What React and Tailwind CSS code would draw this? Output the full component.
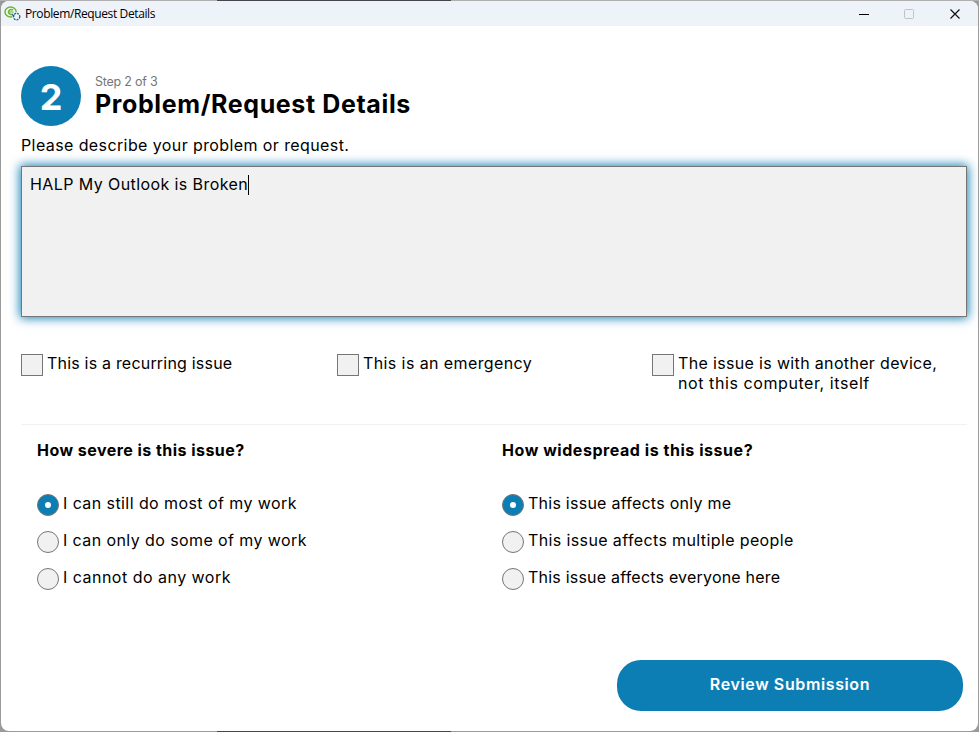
function AppIcon() {
  return (
    <svg width="17" height="16" viewBox="0 0 17 16" fill="none">
      <ellipse cx="6.6" cy="6" rx="5.6" ry="4.9" stroke="#6cb52d" strokeWidth="1.5" />
      <path d="M9 4.2A2.7 2.4 0 1 0 9 7.8" stroke="#6cb52d" strokeWidth="1.5" />
      <path d="M5 6h4.6" stroke="#6cb52d" strokeWidth="1.2" />
      <circle cx="12.4" cy="10.6" r="4.4" fill="#eef3f9" />
      <circle cx="12.6" cy="10.6" r="3.2" stroke="#1d5f86" strokeWidth="1.3" strokeDasharray="2 1" />
      <path d="M8 8.4l2.4 1.8" stroke="#1d5f86" strokeWidth="1.2" />
    </svg>
  );
}

function TitleBar() {
  return (
    <header className="flex h-[25px] shrink-0 items-center bg-[#eef3f9] pl-[3px]">
      <AppIcon />
      <span className="ml-1 grow font-['Open_Sans','Noto_Sans',sans-serif] text-[12px] leading-4 tracking-[-0.38px] text-black">
        Problem/Request Details
      </span>
      <svg width="119" height="24" viewBox="0 0 119 24" fill="none">
        <path d="M0 12.5h10" stroke="#000" />
        <rect x="45.5" y="7.5" width="9" height="9" rx="1" stroke="#c0c4c9" />
        <path d="M91.5 7.5l9 9M100.5 7.5l-9 9" stroke="#111" strokeWidth="1.2" />
      </svg>
    </header>
  );
}

function Checkbox({ children }) {
  return (
    <label className="flex gap-1">
      <span className="mt-px size-[22px] shrink-0 border border-[#767676] bg-[#f1f1f1]" />
      <span className="flex flex-col whitespace-nowrap">{children}</span>
    </label>
  );
}

function Radio({ checked, children }) {
  return (
    <label className="flex h-[37px] gap-1 whitespace-nowrap">
      <span
        className={
          "mt-px flex size-[22px] shrink-0 items-center justify-center rounded-full border border-[#767676] " +
          (checked ? "bg-[#0d7eb4]" : "bg-[#f1f1f1]")
        }
      >
        {checked && <span className="size-[6px] rounded-full bg-white" />}
      </span>
      {children}
    </label>
  );
}

export default function App() {
  return (
    <div className="flex h-[732px] w-[979px] flex-col overflow-hidden bg-[#9a9a9a] font-['Inter',sans-serif] text-[16px] leading-5 text-black">
      <div className="flex h-px shrink-0 bg-[#b0b0b0] pl-[217px]">
        <div className="w-[234px] bg-[#45454a]" />
      </div>
      <div className="mr-px ml-px flex h-[730px] flex-col overflow-hidden rounded-[8px] bg-white">
        <TitleBar />
        <main className="flex grow flex-col pr-[11px] pl-5">
          <div className="mt-10 flex items-center gap-[14px]">
            <div className="flex size-[60px] items-center justify-center rounded-full bg-[#0d7eb4] text-[36px] font-bold text-white">
              <span className="mt-px">2</span>
            </div>
            <div className="-mt-px flex flex-col">
              <span className="text-[12.5px] leading-[17px] tracking-[-0.22px] text-[#767676]">Step 2 of 3</span>
              <h1 className="text-[25px] leading-[28px] font-bold tracking-[0.62px]">Problem/Request Details</h1>
            </div>
          </div>
          <p className="mt-[9px] tracking-[0.4px]">Please describe your problem or request.</p>
          <div className="mt-[11px] flex h-[151px] items-start border border-[#767676] bg-[#f1f1f1] pt-[7px] pl-2 shadow-[0_0_10px_1px_#0d7eb4]">
            <span className="leading-[21px] tracking-[0.41px]">HALP My Outlook is Broken</span>
            <span className="mt-px h-5 w-px bg-black" />
          </div>
          <div className="mt-9 grid h-[72px] grid-cols-[316px_315px_315px] border-b border-[#f1f1f1]">
            <Checkbox>
              <span className="tracking-[0.2px]">This is a recurring issue</span>
            </Checkbox>
            <Checkbox>
              <span className="tracking-[0.4px]">This is an emergency</span>
            </Checkbox>
            <Checkbox>
              <span className="tracking-[0.34px]">The issue is with another device,</span>
              <span className="tracking-[0.58px]">not this computer, itself</span>
            </Checkbox>
          </div>
          <div className="flex pt-[15px] pl-4">
            <section className="w-[465px]">
              <h2 className="mb-[33px] font-bold tracking-[0.46px]">How severe is this issue?</h2>
              <Radio checked>
                <span className="tracking-[0.42px]">I can still do most of my work</span>
              </Radio>
              <Radio>
                <span className="tracking-[0.41px]">I can only do some of my work</span>
              </Radio>
              <Radio>
                <span className="tracking-[0.48px]">I cannot do any work</span>
              </Radio>
            </section>
            <section>
              <h2 className="mb-[33px] font-bold tracking-[0.55px]">How widespread is this issue?</h2>
              <Radio checked>
                <span className="tracking-[0.25px]">This issue affects only me</span>
              </Radio>
              <Radio>
                <span className="tracking-[0.38px]">This issue affects multiple people</span>
              </Radio>
              <Radio>
                <span className="tracking-[0.21px]">This issue affects everyone here</span>
              </Radio>
            </section>
          </div>
          <button className="mt-auto mr-1 mb-5 h-[51px] w-[346px] self-end rounded-[24px] bg-[#0d7eb4] pb-1 font-semibold tracking-[0.62px] text-white">
            Review Submission
          </button>
        </main>
      </div>
      <div className="flex h-px shrink-0 pl-[217px]">
        <div className="w-[234px] bg-[#45454a]" />
      </div>
    </div>
  );
}
